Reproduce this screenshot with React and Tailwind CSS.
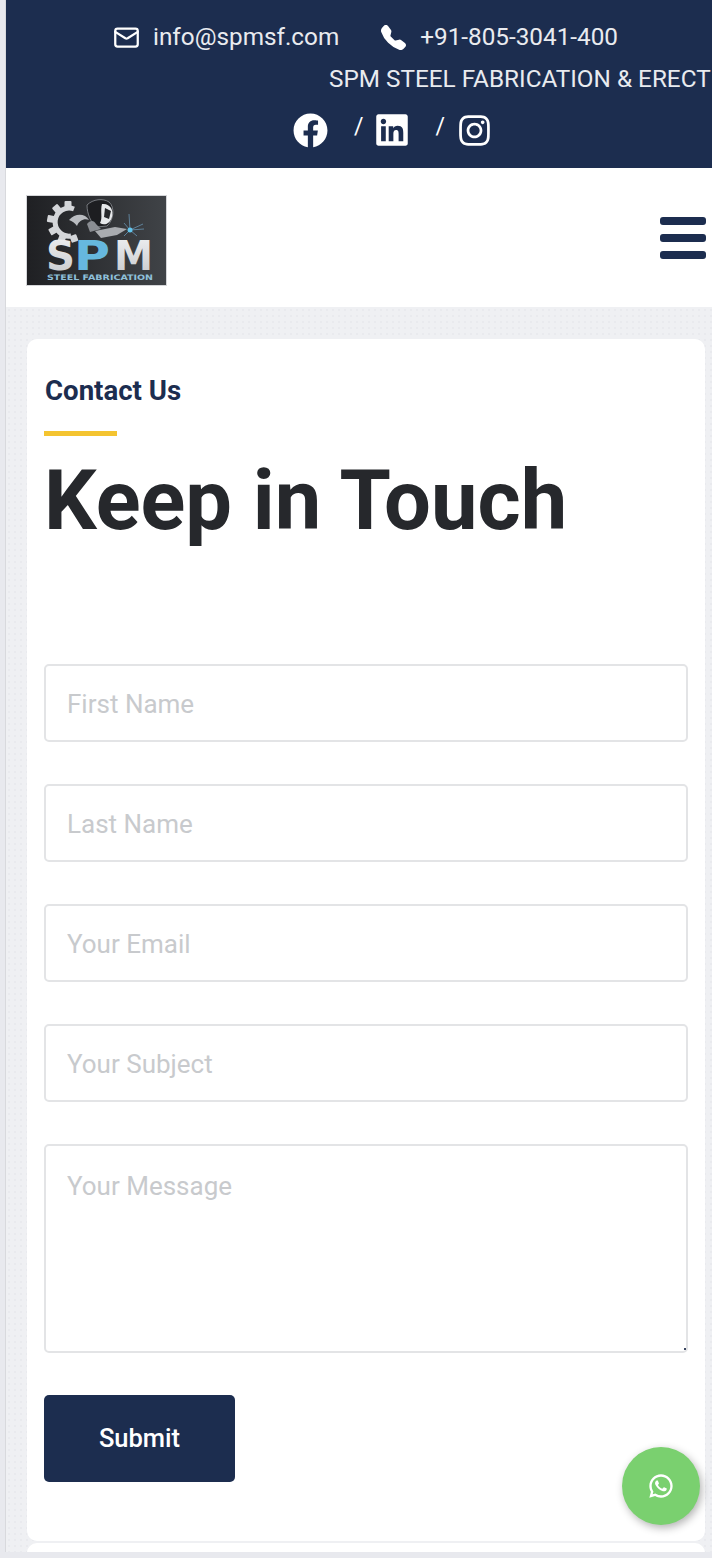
import React from 'react';
import { FaFacebook, FaLinkedin, FaInstagram } from 'react-icons/fa';
import { RiWhatsappLine } from 'react-icons/ri';
import { BsTelephoneFill } from 'react-icons/bs';
import { Mail } from 'lucide-react';

function Logo() {
  const teeth = [];
  for (let i = 0; i < 6; i++) {
    teeth.push(<rect key={i} x="-3.5" y="-21" width="7" height="7" rx="1" fill="#d4d6d9" transform={`rotate(${i * 40})`} />);
  }
  const textProps = { fontFamily: "'DejaVu Sans', sans-serif", fontWeight: 700 };
  return (
    <svg width="139" height="89" viewBox="0 0 139 89" className="block">
      <defs>
        <linearGradient id="lg" x1="0" y1="0" x2="1" y2="0">
          <stop offset="0" stopColor="#1f2023" />
          <stop offset="1" stopColor="#404347" />
        </linearGradient>
        <linearGradient id="sm" x1="0" y1="0" x2="0" y2="1">
          <stop offset="0" stopColor="#f1f2f3" />
          <stop offset="1" stopColor="#c4c6ca" />
        </linearGradient>
      </defs>
      <rect width="139" height="89" fill="url(#lg)" />
      <g transform="translate(41,26) scale(-1,1)">{teeth}</g>
      <path d="M 47 13 A 14 14 0 1 0 44 40" fill="none" stroke="#d4d6d9" strokeWidth="5" />
      <path d="M42 24 C 48 17, 58 17, 62 24 C 58 22, 52 24, 50 30 C 48 27, 45 25, 42 24Z" fill="#b9bcc0" />
      <path d="M60 9 C 66 3, 76 2, 82 6 C 88 11, 87 24, 80 30 L 70 31 C 64 27, 60 18, 60 9Z" fill="#1d1e21" stroke="#8c8f94" strokeWidth="0.8" />
      <path d="M75 8 C 83 7, 87 14, 85 21 C 83 28, 77 30, 73 27 C 76 22, 73 15, 75 8Z" fill="#e6e8ea" />
      <path d="M78 12 L84 15 L82 23 L77 21Z" fill="#26282b" />
      <path d="M60 28 C 63 24, 67 24, 69 28 L 74 33 L 63 36Z" fill="#8a8d92" />
      <path d="M68 35 L88 31 L100 33 L90 39 L74 42Z" fill="#a9acb0" />
      <path d="M103 34 L116 28 M103 34 L117 33 M103 34 L97 27 M103 34 L97 40 M103 34 L102 18 M103 34 L110 40" stroke="#6f9fc0" strokeWidth="0.7" />
      <circle cx="103" cy="34" r="2.5" fill="#63c6ee" />
      <text x="19" y="74" {...textProps} fontSize="41" fill="url(#sm)" textLength="29" lengthAdjust="spacingAndGlyphs">S</text>
      <text x="47" y="74" {...textProps} fontSize="41" fill="#66b8de" textLength="36" lengthAdjust="spacingAndGlyphs">P</text>
      <text x="87" y="74" {...textProps} fontSize="41" fill="url(#sm)" textLength="39" lengthAdjust="spacingAndGlyphs">M</text>
      <text x="20" y="84" {...textProps} fontSize="7.5" fill="#8fc0da" textLength="106" lengthAdjust="spacingAndGlyphs">STEEL FABRICATION</text>
    </svg>
  );
}

const fieldCls = "block w-full h-[78px] rounded-[5px] border-2 border-[#e3e4e6] bg-white px-[21px] pt-[2px] text-[26px] outline-none placeholder:text-[#c8cacd]";

export default function App() {
  return (
    <div className="w-[712px] h-[1558px] overflow-hidden bg-[#e8e9ee] pl-[5px] pb-[6px] font-['Roboto',sans-serif]">
      <div className="h-full flex flex-col overflow-hidden border-l border-[#d8d9dd]">
        <header className="h-[168px] shrink-0 bg-[#1c2d4f] text-[#e9ebef] overflow-hidden">
          <div className="flex items-center h-[24px] mt-[25px] text-[24.3px] leading-none">
            <Mail className="ml-[107px] text-white" size={27} strokeWidth={2} />
            <span className="ml-[13px]">info@spmsf.com</span>
            <BsTelephoneFill className="ml-[42px] text-white" size={25} />
            <span className="ml-[14px]">+91-805-3041-400</span>
          </div>
          <div className="mt-[18px] pl-[323px] whitespace-nowrap text-[24.3px] leading-[24px]">SPM STEEL FABRICATION &amp; ERECTION</div>
          <div className="flex items-center mt-[21px] h-[36px] text-white text-[23px]">
            <FaFacebook className="ml-[287px]" size={35} />
            <span className="ml-[26px] -mt-[6px]">/</span>
            <FaLinkedin className="ml-[10px]" size={36} />
            <span className="ml-[26px] -mt-[6px]">/</span>
            <FaInstagram className="ml-[12px]" size={35} />
          </div>
        </header>
        <nav className="h-[139px] shrink-0 bg-white flex items-center justify-between pl-[21px] pr-[6px]">
          <div className="mt-[6px] outline outline-1 outline-[#d5d6d9]"><Logo /></div>
          <div className="flex flex-col gap-[9px] w-[46px]">
            <span className="h-[8px] rounded-[3px] bg-[#1c2d4f]" />
            <span className="h-[8px] rounded-[3px] bg-[#1c2d4f]" />
            <span className="h-[8px] rounded-[3px] bg-[#1c2d4f]" />
          </div>
        </nav>
        <main className="flex-1 min-h-0 overflow-hidden bg-[#eff0f3] bg-[radial-gradient(#e9eaee_1px,transparent_1px)] bg-[length:6px_6px] pl-[21px] pr-[7px] pt-[32px]">
          <section className="h-[1202px] rounded-[10px] bg-white px-[17px] pt-[35px]">
            <h3 className="text-[27.6px] leading-[34px] font-bold text-[#1c2d4f] pl-px">Contact Us</h3>
            <div className="mt-[23px] h-[5px] w-[73px] bg-[#f4c430]" />
            <h1 className="mt-[13px] text-[83px] leading-[104px] font-bold text-[#26282c]">Keep in Touch</h1>
            <form className="mt-[111px] flex flex-col gap-[42px]">
              <input className={fieldCls} placeholder="First Name" />
              <input className={fieldCls} placeholder="Last Name" />
              <input className={fieldCls} placeholder="Your Email" />
              <input className={fieldCls} placeholder="Your Subject" />
              <div className="relative">
                <textarea className="block w-full h-[209px] rounded-[5px] border-2 border-[#e3e4e6] bg-white px-[21px] py-[22px] text-[26px] leading-[36px] outline-none resize-none placeholder:text-[#c8cacd]" placeholder="Your Message" />
                <span className="absolute right-[2px] bottom-[3px] w-[2px] h-[2px] bg-[#3a4660]" />
              </div>
              <button type="button" className="w-[191px] h-[87px] rounded-[5px] bg-[#1c2d4f] text-white text-[25.5px] font-medium">Submit</button>
            </form>
          </section>
          <div className="mt-[2px] h-[40px] rounded-[10px] bg-white" />
        </main>
      </div>
      <a className="fixed left-[622px] top-[1447px] w-[78px] h-[78px] rounded-full bg-[#7ad06f] flex items-center justify-center text-white shadow-[2px_3px_8px_rgba(0,0,0,0.3)]">
        <RiWhatsappLine size={28} />
      </a>
    </div>
  );
}
